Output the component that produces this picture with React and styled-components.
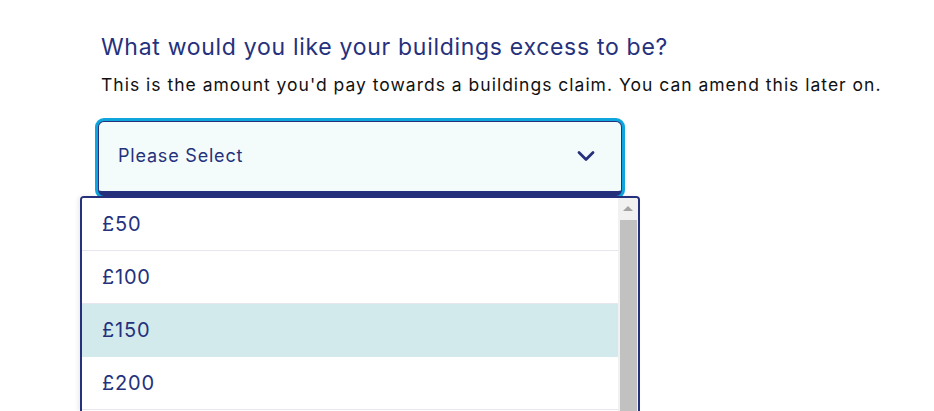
import { useState } from 'react'
import styled, { createGlobalStyle } from 'styled-components'

const GlobalStyle = createGlobalStyle`
  html, body {
    margin: 0;
    padding: 0;
    background: #ffffff;
    overflow: hidden;
  }
  body {
    font-family: Inter, "Noto Sans", sans-serif;
  }
`

const Page = styled.div`
  padding: 33px 0 0 101px;
  height: 411px;
  box-sizing: border-box;
`

const Question = styled.h2`
  margin: 0;
  font-size: 23px;
  font-weight: 400;
  letter-spacing: 0.7px;
  color: #25317c;
  line-height: 28px;
`

const Hint = styled.p`
  margin: 13px 0 0;
  font-size: 17.5px;
  letter-spacing: 1px;
  color: #111111;
  line-height: 22px;
`

const SelectWrap = styled.div`
  position: relative;
  margin: 25px 0 0 -3px;
  width: 524px;
`

const SelectBox = styled.button`
  all: unset;
  box-sizing: border-box;
  display: flex;
  align-items: center;
  justify-content: space-between;
  width: 100%;
  height: 75px;
  padding: 0 26px 2px 19px;
  background: #f4fbfb;
  border: 1px solid #25317c;
  border-bottom: 5px solid #25317c;
  border-radius: 6px;
  box-shadow: 0 0 0 3px #0ea5dc;
  font-family: inherit;
  font-size: 18px;
  letter-spacing: 0.8px;
  color: #25317c;
  cursor: pointer;
`

const Menu = styled.div`
  position: absolute;
  top: 75px;
  left: -18px;
  width: 560px;
  box-sizing: border-box;
  display: flex;
  background: #ffffff;
  border: 2px solid #25317c;
  border-bottom: none;
  border-radius: 4px 4px 0 0;
  box-shadow: -2px 0 4px rgba(0, 0, 0, 0.08);
  height: 215px;
  overflow: hidden;
`

const Options = styled.ul`
  list-style: none;
  margin: 0;
  padding: 0;
  flex: 1;
`

const Option = styled.li`
  height: 52px;
  display: flex;
  align-items: center;
  padding-left: 20px;
  font-size: 20px;
  letter-spacing: 0.8px;
  color: #25317c;
  background: ${p => (p.$active ? '#d3eaec' : '#ffffff')};
  border-bottom: 1px solid ${p => (p.$active ? '#d3eaec' : '#e6e6ef')};
`

const Scrollbar = styled.div`
  width: 20px;
  background: #f1f1f1;
  display: flex;
  flex-direction: column;
  align-items: center;
`

const ArrowUp = styled.div`
  width: 0;
  height: 0;
  margin-top: 8px;
  border-left: 5px solid transparent;
  border-right: 5px solid transparent;
  border-bottom: 5px solid #a3a3a3;
`

const Thumb = styled.div`
  margin-top: 9px;
  width: 17px;
  flex: 1;
  background: #c1c1c1;
`

const Chevron = () => (
  <svg width="18" height="12" viewBox="0 0 18 12" fill="none">
    <path d="M2 2.5l7 7 7-7" stroke="#25317c" strokeWidth="2.8" strokeLinecap="round" strokeLinejoin="round" />
  </svg>
)

const options = ['£50', '£100', '£150', '£200']

export default function App() {
  const [active] = useState('£150')
  return (
    <Page>
      <GlobalStyle />
      <Question>What would you like your buildings excess to be?</Question>
      <Hint>This is the amount you'd pay towards a buildings claim. You can amend this later on.</Hint>
      <SelectWrap>
        <SelectBox>
          <span>Please Select</span>
          <Chevron />
        </SelectBox>
        <Menu>
          <Options>
            {options.map(o => (
              <Option key={o} $active={o === active}>{o}</Option>
            ))}
          </Options>
          <Scrollbar>
            <ArrowUp />
            <Thumb />
          </Scrollbar>
        </Menu>
      </SelectWrap>
    </Page>
  )
}
